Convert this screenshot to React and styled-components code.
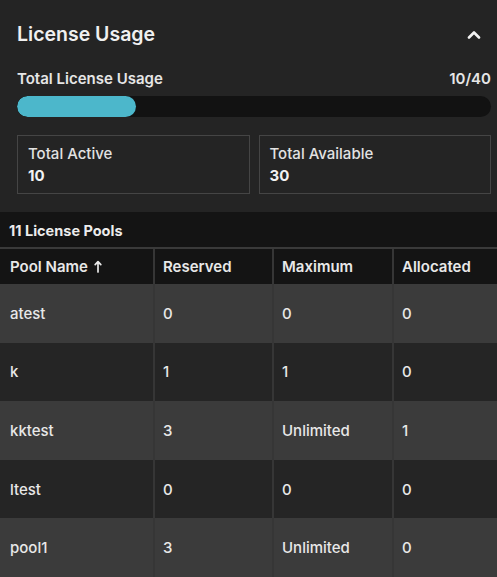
import React from "react";
import styled, { createGlobalStyle } from "styled-components";

const Global = createGlobalStyle`
  html, body { margin: 0; padding: 0; background: #141414; }
  body { font-family: Inter, "Noto Sans", "Liberation Sans", sans-serif; color: #ececec; }
  * { box-sizing: border-box; }
`;

const Page = styled.div`
  width: 497px;
  height: 577px;
  overflow: hidden;
  background: #141414;
  display: flex;
  flex-direction: column;
`;

const Panel = styled.section`
  background: #242424;
  padding: 22px 6px 18px 17px;
  display: flex;
  flex-direction: column;
`;

const TitleRow = styled.div`
  display: flex;
  align-items: center;
  justify-content: space-between;
  height: 24px;
  padding-right: 10px;
`;

const Title = styled.h2`
  margin: 0;
  font-size: 19.5px;
  font-weight: 600;
  line-height: 24px;
  color: #f0f0f0;
`;

const UsageRow = styled.div`
  display: flex;
  justify-content: space-between;
  align-items: center;
  margin-top: 24px;
  font-size: 15px;
  font-weight: 600;
  line-height: 18px;
  color: #e6e6e6;
`;

const Track = styled.div`
  margin-top: 8px;
  height: 21px;
  border-radius: 11px;
  background: #121212;
  overflow: hidden;
`;

const Fill = styled.div`
  height: 100%;
  border-radius: 11px;
  background: #4cb7cb;
`;

const Cards = styled.div`
  margin-top: 18px;
  display: grid;
  grid-template-columns: 1fr 1fr;
  gap: 9px;
`;

const Card = styled.div`
  border: 1px solid #454545;
  height: 59px;
  padding: 9px 10px 8px;
  display: flex;
  flex-direction: column;
`;

const CardLabel = styled.span`
  font-size: 15px;
  font-weight: 500;
  line-height: 18px;
  color: #e2e2e2;
`;

const CardValue = styled.span`
  margin-top: 4px;
  font-size: 15px;
  font-weight: 700;
  line-height: 18px;
  color: #f2f2f2;
`;

const PoolsBar = styled.div`
  height: 37px;
  padding: 2px 9px 0;
  display: flex;
  align-items: center;
  font-size: 14.5px;
  font-weight: 700;
  color: #ececec;
  border-bottom: 2px solid #3a3a3a;
`;

const Table = styled.div`
  display: grid;
  grid-template-columns: 153px 119px 120px 1fr;
`;

const Cell = styled.div`
  height: ${(p) => (p.$head ? "35px" : "58.6px")};
  display: flex;
  align-items: center;
  gap: 6px;
  padding-left: ${(p) => (p.$first ? "10px" : "8px")};
  border-left: ${(p) => (p.$first ? "none" : "2px solid #363636")};
  background: ${(p) => (p.$head ? "#141414" : p.$alt ? "#252525" : "#3b3b3b")};
  font-size: 15px;
  font-weight: ${(p) => (p.$head ? 600 : 500)};
  color: #e8e8e8;
  white-space: nowrap;
`;

const Chevron = () => (
  <svg width="14" height="9" viewBox="0 0 14 9" fill="none">
    <path d="M2 7.5 L7 2.5 L12 7.5" stroke="#f2f2f2" strokeWidth="2.6" strokeLinecap="round" strokeLinejoin="round" />
  </svg>
);

const SortUp = () => (
  <svg width="8" height="13" viewBox="0 0 8 13" fill="none">
    <path d="M4 12 V2 M1.2 4.6 L4 1.6 L6.8 4.6" stroke="#e8e8e8" strokeWidth="1.7" strokeLinecap="round" strokeLinejoin="round" />
  </svg>
);

const rows = [
  ["atest", "0", "0", "0"],
  ["k", "1", "1", "0"],
  ["kktest", "3", "Unlimited", "1"],
  ["ltest", "0", "0", "0"],
  ["pool1", "3", "Unlimited", "0"],
];

export default function App() {
  const used = 10;
  const total = 40;
  return (
    <Page>
      <Global />
      <Panel>
        <TitleRow>
          <Title>License Usage</Title>
          <Chevron />
        </TitleRow>
        <UsageRow>
          <span>Total License Usage</span>
          <span>{used}/{total}</span>
        </UsageRow>
        <Track>
          <Fill style={{ width: `${(used / total) * 100}%` }} />
        </Track>
        <Cards>
          <Card>
            <CardLabel>Total Active</CardLabel>
            <CardValue>{used}</CardValue>
          </Card>
          <Card>
            <CardLabel>Total Available</CardLabel>
            <CardValue>{total - used}</CardValue>
          </Card>
        </Cards>
      </Panel>
      <PoolsBar>11 License Pools</PoolsBar>
      <Table>
        <Cell $head $first>Pool Name <SortUp /></Cell>
        <Cell $head>Reserved</Cell>
        <Cell $head>Maximum</Cell>
        <Cell $head>Allocated</Cell>
        {rows.map((r, i) =>
          r.map((v, j) => (
            <Cell key={`${i}-${j}`} $first={j === 0} $alt={i % 2 === 1}>
              {v}
            </Cell>
          ))
        )}
      </Table>
    </Page>
  );
}
